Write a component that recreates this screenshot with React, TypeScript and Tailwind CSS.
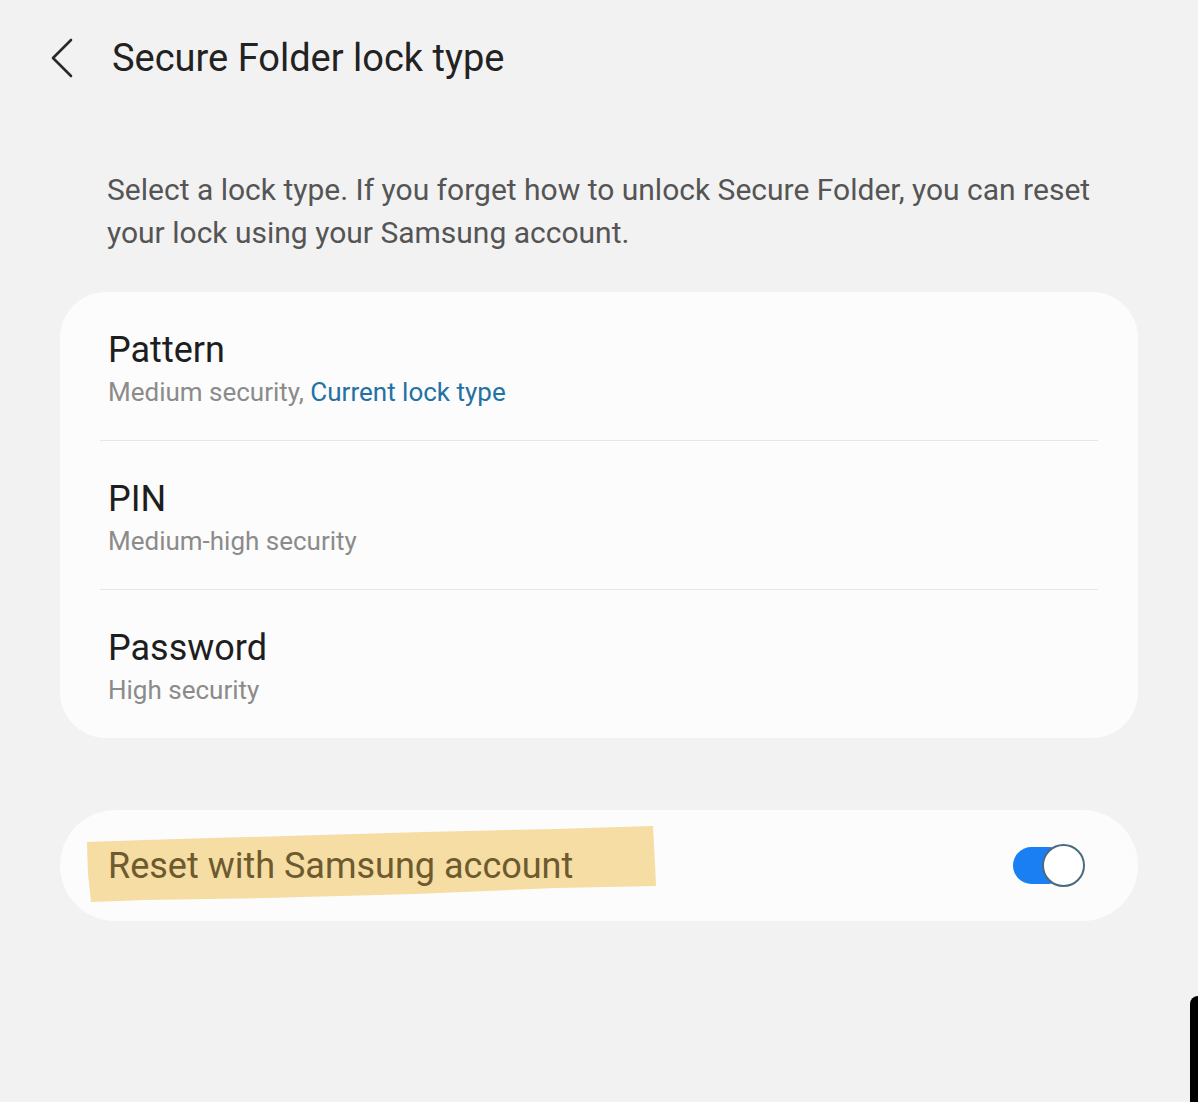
import React from "react";

function Item({ title, sub, last }: { title: string; sub: React.ReactNode; last?: boolean }) {
  return (
    <div className="relative">
      <div className="flex h-[148px] flex-col pl-[48px] pt-[37px]">
        <div className="text-[36px] leading-[42px] text-[#1e1e1e]">{title}</div>
        <div className="mt-[6px] text-[26px] leading-[30px] text-[#8b8b8b]">{sub}</div>
      </div>
      {!last && <div className="mx-[40px] h-px bg-[#e6e6e6]" />}
    </div>
  );
}

export default function App() {
  return (
    <div
      className="relative h-[1102px] w-full overflow-hidden bg-[#f2f2f2]"
      style={{ fontFamily: "Roboto, 'Noto Sans', sans-serif" }}
    >
      <div className="flex h-[76px] items-center pt-[40px]">
        <svg className="ml-[49px] h-[40px] w-[26px]" viewBox="0 0 26 40" fill="none">
          <path d="M22 2 L4 20 L22 38" stroke="#2a2a2a" strokeWidth="2.6" strokeLinecap="round" strokeLinejoin="round" />
        </svg>
        <div className="ml-[37px] text-[38px] leading-[44px] text-[#222]">Secure Folder lock type</div>
      </div>

      <div className="mt-[92px] w-[1110px] pl-[107px] text-[30px] leading-[43px] text-[#555]">
        Select a lock type. If you forget how to unlock Secure Folder, you can reset your lock using your Samsung account.
      </div>

      <div className="mx-[60px] mt-[38px] rounded-[46px] bg-[#fcfcfc]">
        <Item
          title="Pattern"
          sub={
            <>
              Medium security, <span className="text-[#2471a3]">Current lock type</span>
            </>
          }
        />
        <Item title="PIN" sub="Medium-high security" />
        <Item title="Password" sub="High security" last />
      </div>

      <div className="relative mx-[60px] mt-[72px] flex h-[111px] items-center justify-between rounded-[56px] bg-[#fcfcfc] pl-[48px] pr-[53px]">
        <svg className="absolute left-[25px] top-[14px] h-[78px] w-[572px]" viewBox="0 0 572 78" fill="none">
          <path
            d="M2 18 L60 16 L200 12 L340 8 L470 5 L568 2 L570 40 L571 62 L470 64 L330 70 L180 74 L60 76 L6 78 L3 50 Z"
            fill="#f5dda3"
          />
        </svg>
        <div className="relative text-[36px] leading-[42px] text-[#6d5a2f]">Reset with Samsung account</div>
        <div className="relative h-[44px] w-[72px]">
          <div className="absolute left-0 top-[3px] h-[37px] w-[54px] rounded-full bg-[#1a7ff2]" />
          <div className="absolute right-0 top-0 h-[43px] w-[43px] rounded-full border-2 border-[#4a6a80] bg-white" />
        </div>
      </div>

      <div className="absolute bottom-0 right-0 h-[106px] w-[8px] rounded-tl-[8px] bg-black" />
    </div>
  );
}
